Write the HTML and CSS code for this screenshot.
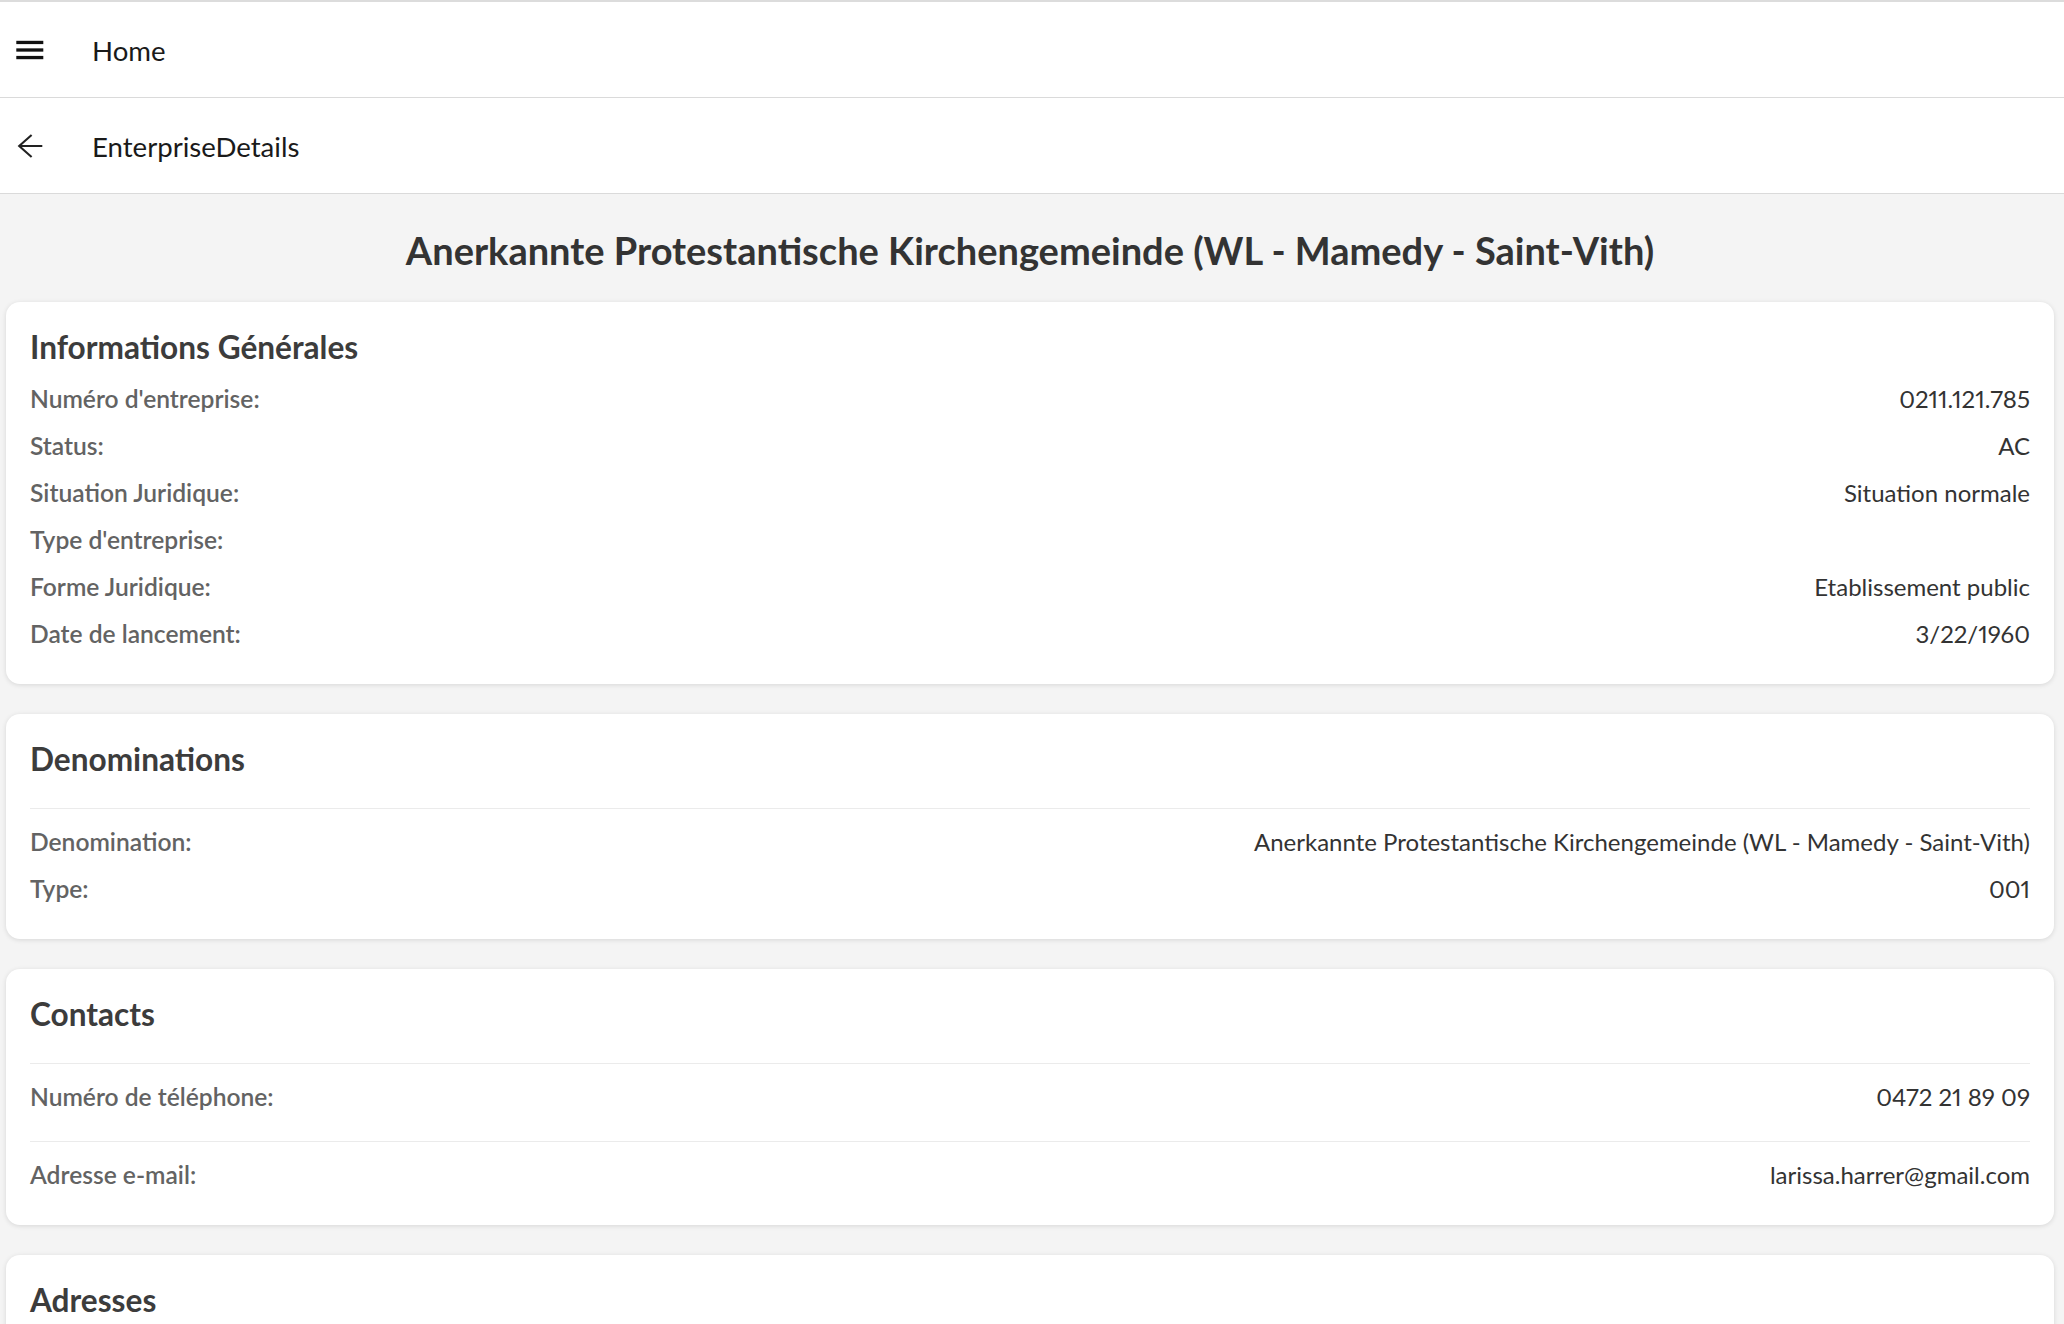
FILE: index.html
```html
<!DOCTYPE html>
<html lang="fr">
<head>
<meta charset="utf-8">
<title>EnterpriseDetails</title>
<link rel="stylesheet" href="styles.css">
</head>
<body>
<header class="app-header">
  <div class="bar">
    <svg class="bar-icon" viewBox="0 0 36 36" aria-hidden="true">
      <rect x="4.3" y="8.8" width="27" height="3.3" fill="#111"/>
      <rect x="4.3" y="16.35" width="27" height="3.3" fill="#111"/>
      <rect x="4.3" y="23.9" width="27" height="3.3" fill="#111"/>
    </svg>
    <span class="bar-title">Home</span>
  </div>
  <div class="bar">
    <svg class="bar-icon" viewBox="0 0 36 36" aria-hidden="true">
      <path d="M30.3 18H7.2 M19.6 7 L7.2 18 L19.6 29" fill="none" stroke="#222" stroke-width="2.1" stroke-linecap="butt" stroke-linejoin="miter"/>
    </svg>
    <span class="bar-title">EnterpriseDetails</span>
  </div>
</header>

<main class="content">
  <h1 class="page-title">Anerkannte Protestantische Kirchengemeinde (WL - Mamedy - Saint-Vith)</h1>

  <section class="card">
    <h2 class="card-title">Informations Générales</h2>
    <div class="row"><span class="label">Numéro d'entreprise:</span><span class="value">0211.121.785</span></div>
    <div class="row"><span class="label">Status:</span><span class="value">AC</span></div>
    <div class="row"><span class="label">Situation Juridique:</span><span class="value">Situation normale</span></div>
    <div class="row"><span class="label">Type d'entreprise:</span><span class="value"></span></div>
    <div class="row"><span class="label">Forme Juridique:</span><span class="value">Etablissement public</span></div>
    <div class="row"><span class="label">Date de lancement:</span><span class="value">3/22/1960</span></div>
  </section>

  <section class="card">
    <h2 class="card-title">Denominations</h2>
    <div class="group">
      <div class="row"><span class="label">Denomination:</span><span class="value">Anerkannte Protestantische Kirchengemeinde (WL - Mamedy - Saint-Vith)</span></div>
      <div class="row"><span class="label">Type:</span><span class="value">001</span></div>
    </div>
  </section>

  <section class="card">
    <h2 class="card-title">Contacts</h2>
    <div class="group">
      <div class="row"><span class="label">Numéro de téléphone:</span><span class="value">0472 21 89 09</span></div>
    </div>
    <div class="group">
      <div class="row"><span class="label">Adresse e-mail:</span><span class="value">larissa.harrer@gmail.com</span></div>
    </div>
  </section>

  <section class="card">
    <h2 class="card-title">Adresses</h2>
  </section>
</main>
</body>
</html>
```

FILE: styles.css
```css
* {
  box-sizing: border-box;
}

html,
body {
  margin: 0;
  padding: 0;
}

body {
  background: #f4f4f4;
  font-family: Lato, "Open Sans", "Liberation Sans", sans-serif;
  color: #333;
}

.app-header {
  border-top: 2px solid #dcdcdc;
  background: #fff;
}

.bar {
  display: flex;
  align-items: center;
  height: 96px;
  padding-left: 12px;
  background: #fff;
  border-bottom: 1px solid #dadada;
}

.bar-icon {
  display: block;
  width: 36px;
  height: 36px;
  flex: none;
}

.bar-title {
  margin-left: 44px;
  padding-top: 2px;
  font-size: 27.6px;
  color: #1a1a1a;
}

.content {
  padding: 0 10px 0 6px;
}

.page-title {
  margin: 31px 0 27px;
  font-size: 38px;
  line-height: 50px;
  font-weight: 700;
  text-align: center;
  color: #333;
}

.card {
  display: flex;
  flex-direction: column;
  background: #fff;
  border-radius: 14px;
  box-shadow: 0 1px 5px rgba(0, 0, 0, 0.12);
  padding: 25px 24px 27px;
  margin-bottom: 30px;
}

.card-title {
  margin: 0 0 8px;
  font-size: 31.6px;
  line-height: 40px;
  font-weight: 700;
  color: #3c3c3c;
}

.group {
  margin-top: 21px;
  padding-top: 9px;
  border-top: 1px solid #ebebeb;
}

.row {
  display: flex;
  justify-content: space-between;
  align-items: center;
  height: 47px;
  font-size: 24px;
  line-height: 47px;
}

.label {
  font-size: 24.6px;
  font-weight: 600;
  color: #636363;
}

.value {
  color: #333;
  text-align: right;
  font-variant-numeric: proportional-nums;
}
```
